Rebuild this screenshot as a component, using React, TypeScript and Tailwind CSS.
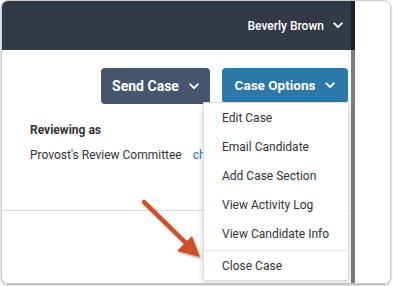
import React from "react";

const Chevron = ({ className }: { className?: string }) => (
    <svg viewBox="0 0 12 8" className={className} fill="none">
        <path d="M1.5 1.5 6 6l4.5-4.5" stroke="currentColor" strokeWidth="2.4" strokeLinecap="round" strokeLinejoin="round" />
    </svg>
);

const menuItems = ["Edit Case", "Email Candidate", "Add Case Section", "View Activity Log", "View Candidate Info"];

export default function App() {
    return (
        <div className="relative w-[393px] h-[286px] bg-white overflow-hidden" style={{ fontFamily: "Roboto, 'Liberation Sans', sans-serif" }}>
            <div className="ml-[1px] w-[390px] h-[284px] rounded-[7px] border border-[#c9c9c9] overflow-hidden flex shadow-[0_1px_2px_rgba(0,0,0,0.35)]">
                {/* main panel */}
                <div className="w-[349px] flex flex-col">
                    <div className="h-[49px] bg-[#323a47] flex items-center justify-end pr-[8px] text-white">
                        <span className="text-[12px] font-medium">Beverly Brown</span>
                        <Chevron className="w-[10px] h-[7px] ml-[9px]" />
                    </div>
                    <div className="relative flex-1 flex flex-col">
                        <div className="mt-[18px] flex justify-end gap-[12px] pr-[3px]">
                            <button className="w-[109px] h-[36px] rounded-[4px] bg-[#46566f] text-white text-[14px] font-bold flex items-center justify-center gap-[10px]">
                                Send Case
                                <Chevron className="w-[10px] h-[7px]" />
                            </button>
                            <button className="w-[126px] h-[35px] rounded-[4px] bg-[#2b79a8] text-white text-[13.5px] font-bold flex items-center justify-center gap-[10px]">
                                Case Options
                                <Chevron className="w-[10px] h-[7px]" />
                            </button>
                        </div>
                        <div className="pl-[28px] mt-[18px] text-[12px] leading-[16px] text-[#333]">
                            <div className="font-bold">Reviewing as</div>
                            <div className="mt-[9px] flex">
                                <span>Provost's Review Committee</span>
                                <span className="ml-[11px] w-[10px] overflow-hidden whitespace-nowrap text-[#2b79a8]">change</span>
                            </div>
                        </div>
                        <div className="mt-[47px] border-t border-[#d9d9d9]" />

                        {/* dropdown */}
                        <div className="absolute left-[201px] top-[52px] w-[146px] bg-white border border-[#dcdcdc] rounded-b-[3px] shadow-[0_2px_6px_rgba(0,0,0,0.18)] text-[12px] text-[#333]">
                            {menuItems.map((item) => (
                                <div key={item} className="h-[29px] flex items-center pl-[18px]">{item}</div>
                            ))}
                            <div className="mt-[2px] border-t border-[#e3e3e3]" />
                            <div className="h-[29px] flex items-center pl-[18px]">Close Case</div>
                        </div>
                    </div>
                </div>
                {/* scrollbar */}
                <div className="w-[4px] flex flex-col">
                    <div className="h-[49px] bg-[#1d2028]" />
                    <div className="flex-1 bg-[#7c7c7c]" />
                </div>
                <div className="flex-1 bg-white" />
            </div>

            {/* annotation arrow */}
            <svg className="absolute left-0 top-0 pointer-events-none" width="393" height="286" viewBox="0 0 393 286">
                <defs>
                    <filter id="sh" x="-20%" y="-20%" width="140%" height="140%">
                        <feDropShadow dx="1" dy="1.5" stdDeviation="1.2" floodColor="#000" floodOpacity="0.35" />
                    </filter>
                </defs>
                <g filter="url(#sh)" fill="#cf5028">
                    <line x1="144" y1="202" x2="186" y2="243" stroke="#cf5028" strokeWidth="4.5" strokeLinecap="round" />
                    <polygon points="200,257 177,251 192,236" />
                </g>
            </svg>
        </div>
    );
}
